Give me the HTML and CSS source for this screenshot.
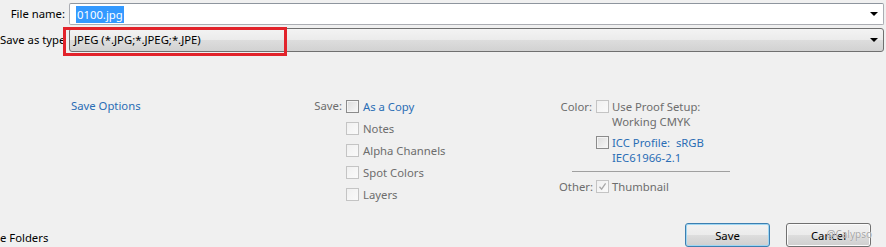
FILE: index.html
```html
<!DOCTYPE html>
<html>
<head>
<meta charset="utf-8">
<link rel="stylesheet" href="styles.css">
</head>
<body>
<div class="dialog">
  <div class="fields">
    <div class="row">
      <span class="lbl">File name:</span>
      <div class="input"><span class="sel">0100.jpg</span><span class="arrow"></span></div>
    </div>
    <div class="row row2">
      <span class="lbl">Save as type</span>
      <div class="combo"><span class="combo-text">JPEG (*.JPG;*.JPEG;*.JPE)</span><span class="arrow"></span></div>
    </div>
    <div class="mark"></div>
  </div>

  <div class="options">
    <div class="link-col"><span class="link">Save Options</span></div>

    <div class="save-group">
      <span class="glabel">Save:</span>
      <div class="checks">
        <div class="check"><span class="box on"></span><span class="link">As a Copy</span></div>
        <div class="check dis"><span class="box"></span><span>Notes</span></div>
        <div class="check dis"><span class="box"></span><span>Alpha Channels</span></div>
        <div class="check dis"><span class="box"></span><span>Spot Colors</span></div>
        <div class="check dis"><span class="box"></span><span>Layers</span></div>
      </div>
    </div>

    <div class="color-group">
      <div class="crow">
        <span class="glabel">Color:</span>
        <span class="box"></span>
        <div class="multi dis"><div>Use Proof Setup:</div><div>Working CMYK</div></div>
      </div>
      <div class="crow icc">
        <span class="glabel"></span>
        <span class="box on"></span>
        <div class="multi link"><div>ICC Profile:&nbsp; sRGB</div><div>IEC61966-2.1</div></div>
      </div>
      <div class="sep"></div>
      <div class="crow">
        <span class="glabel">Other:</span>
        <span class="box checked"><svg width="9" height="9" viewBox="0 0 9 9"><path d="M1.5 4.8 L3.6 7.2 L7.6 1.4" fill="none" stroke="#a8a8a8" stroke-width="1.3"/></svg></span>
        <div class="multi dis"><div>Thumbnail</div></div>
      </div>
    </div>
  </div>

  <div class="bottom">
    <span class="folders">e Folders</span>
    <div class="buttons">
      <button class="btn default">Save</button>
      <button class="btn">Cancel</button>
    </div>
    <span class="watermark">@Calypso</span>
  </div>
</div>
</body>
</html>
```
FILE: styles.css
```css
html, body {
  margin: 0;
  padding: 0;
  background: #f0f0f0;
}
body {
  width: 886px;
  height: 247px;
  overflow: hidden;
  font-family: "Noto Sans", "Open Sans", sans-serif;
  font-size: 11.3px;
  color: #000;
}
.dialog {
  position: relative;
  width: 886px;
  height: 247px;
}
.fields {
  position: relative;
  padding: 3px 2px 0 0;
  display: flex;
  flex-direction: column;
  gap: 3px;
}
.row {
  display: flex;
  align-items: center;
  height: 22px;
}
.row2 {
  height: 24px;
}
.lbl {
  width: 65px;
  margin-right: 4px;
  text-align: right;
  white-space: nowrap;
  line-height: 16px;
}
.input {
  flex: 1;
  height: 20px;
  border: 1px solid #abadb3;
  border-top-color: #8e959e;
  border-radius: 2px;
  background: #fff;
  display: flex;
  align-items: center;
  padding-left: 6px;
}
.sel {
  background: #3399ff;
  color: #fff;
  line-height: 17px;
  padding: 0 1px;
}
.arrow {
  margin-left: auto;
  margin-right: 5px;
  width: 0;
  height: 0;
  border-left: 4px solid transparent;
  border-right: 4px solid transparent;
  border-top: 4px solid #000;
}
.combo {
  flex: 1;
  height: 22px;
  border: 1px solid #707070;
  border-radius: 3px;
  background: linear-gradient(#f3f3f3 0%, #ebebeb 50%, #dddddd 51%, #d2d2d2 100%);
  display: flex;
  align-items: center;
  padding-left: 4px;
}
.combo-text {
  line-height: 16px;
}
.mark {
  position: absolute;
  left: 63px;
  top: 27px;
  width: 218px;
  height: 23px;
  border: 3px solid #e2232b;
}

.options {
  display: flex;
  margin-top: 43px;
  height: 110px;
}
.link {
  color: #2a6db5;
}
.dis {
  color: #6d6d6d;
}
.link-col {
  width: 243px;
  padding-left: 71px;
  line-height: 22px;
}
.save-group {
  display: flex;
  width: 245px;
}
.glabel {
  color: #6d6d6d;
  line-height: 22px;
  text-align: right;
}
.save-group .glabel {
  width: 28px;
  margin-right: 4px;
}
.checks {
  display: flex;
  flex-direction: column;
}
.check {
  display: flex;
  align-items: center;
  height: 22px;
  gap: 4px;
}
.box {
  box-sizing: border-box;
  width: 13px;
  height: 13px;
  border: 1px solid #c4c4c4;
  background: linear-gradient(135deg, #f0f0f0, #fafafa);
  display: inline-flex;
  align-items: center;
  justify-content: center;
  flex: none;
}
.box.on {
  border-color: #8b8b8b;
  background: linear-gradient(135deg, #dcdcdc, #f8f8f8);
  box-shadow: inset 0 0 0 1px #f4f4f4;
}
.color-group {
  display: flex;
  flex-direction: column;
  padding-top: 4px;
}
.crow {
  display: flex;
  align-items: flex-start;
}
.crow .glabel {
  width: 33px;
  margin-right: 4px;
  line-height: 15px;
}
.crow .box {
  margin-top: 1px;
  margin-right: 3px;
}
.multi {
  line-height: 15px;
}
.multi div {
  height: 15px;
  white-space: nowrap;
}
.icc {
  margin-top: 6px;
}
.sep {
  height: 1px;
  background: #a0a0a0;
  margin: 6px 0 7px 13px;
  width: 158px;
}

.bottom {
  position: relative;
  display: flex;
  align-items: flex-end;
  margin-top: 17px;
  height: 25px;
}
.folders {
  line-height: 16px;
  margin-bottom: 1px;
}
.buttons {
  margin-left: auto;
  margin-right: 15px;
  display: flex;
  gap: 16px;
}
.btn {
  box-sizing: border-box;
  width: 85px;
  height: 24px;
  font-family: inherit;
  font-size: 11.3px;
  color: #000;
  border: 1px solid #707070;
  border-radius: 3px;
  background: linear-gradient(#f2f2f2 0%, #ebebeb 50%, #dddddd 51%, #cfcfcf 100%);
  box-shadow: inset 0 0 0 1px #fbfbfb;
  padding: 0;
}
.btn.default {
  border-color: #3c7fb1;
  box-shadow: inset 0 0 0 1px #9fd6f2;
}
.watermark {
  position: absolute;
  right: 14px;
  bottom: 7px;
  font-size: 10px;
  color: #a6a6a6;
  line-height: 12px;
  text-shadow: 0 0 1px #ffffff;
}
```
